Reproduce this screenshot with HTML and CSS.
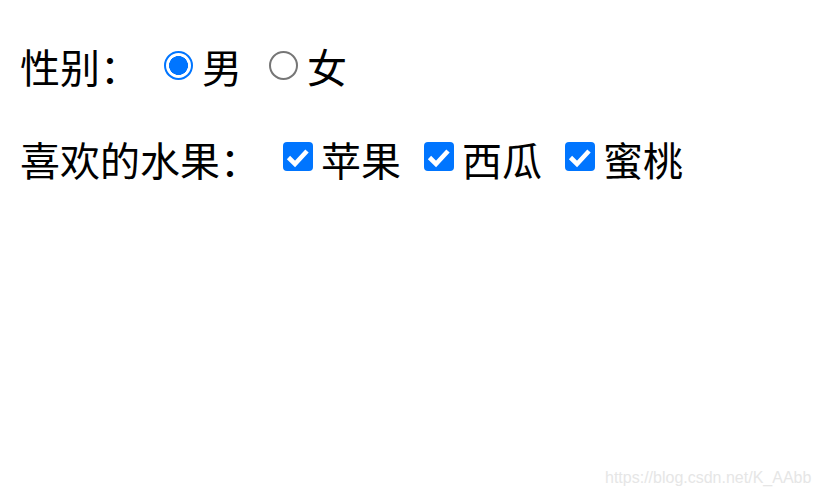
FILE: index.html
```
<!DOCTYPE html>
<html lang="zh-CN">
<head>
<meta charset="utf-8">
<title>表单</title>
<link rel="stylesheet" href="styles.css">
</head>
<body>
<div class="page">
  <div class="row">
    <span class="label">性别：</span>
    <span class="radio checked g-lbl"></span><span class="opt opt-r">男</span>
    <span class="radio g-opt"></span><span class="opt opt-r2">女</span>
  </div>
  <div class="row row2">
    <span class="label">喜欢的水果：</span>
    <span class="check g-lbl"><svg viewBox="0 0 30 29" width="30" height="29"><polyline points="5.5,15.5 12,22 24,9" fill="none" stroke="#fff" stroke-width="4.6" stroke-linecap="butt" stroke-linejoin="miter"/></svg></span><span class="opt">苹果</span>
    <span class="check g-opt"><svg viewBox="0 0 30 29" width="30" height="29"><polyline points="5.5,15.5 12,22 24,9" fill="none" stroke="#fff" stroke-width="4.6" stroke-linecap="butt" stroke-linejoin="miter"/></svg></span><span class="opt">西瓜</span>
    <span class="check g-opt"><svg viewBox="0 0 30 29" width="30" height="29"><polyline points="5.5,15.5 12,22 24,9" fill="none" stroke="#fff" stroke-width="4.6" stroke-linecap="butt" stroke-linejoin="miter"/></svg></span><span class="opt">蜜桃</span>
  </div>
</div>
<div class="watermark">https://blog.csdn.net/K_AAbb</div>
</body>
</html>
```

FILE: styles.css
```
html, body {
  margin: 0;
  padding: 0;
  background: #fff;
}
body {
  width: 820px;
  height: 498px;
  position: relative;
  overflow: hidden;
  font-family: "Noto Sans CJK SC", "Noto Sans", sans-serif;
  font-size: 40px;
  color: #000;
}
.page {
  padding: 40px 0 0 20px;
}
.row {
  display: flex;
  align-items: flex-start;
  height: 53px;
  line-height: 53px;
  white-space: nowrap;
}
.row2 {
  margin-top: 40px;
}
.radio {
  box-sizing: border-box;
  width: 29px;
  height: 29px;
  border-radius: 50%;
  border: 2.8px solid #767676;
  margin-top: 11px;
  flex: none;
}
.radio.checked {
  border-color: #0075ff;
  background: radial-gradient(circle, #0075ff 0 9.2px, #fff 9.7px);
}
.row .radio.g-lbl { margin-left: 24px; }
.row .radio.g-opt { margin-left: 27px; }
.opt { margin-left: 9px; }
.opt-r2 { margin-left: 9px; }
.check {
  width: 30px;
  height: 29px;
  border-radius: 4px;
  background: #0075ff;
  margin-top: 9px;
  flex: none;
  display: block;
}
.check svg { display: block; }
.row .check.g-lbl { margin-left: 23px; }
.row .check.g-opt { margin-left: 23px; }
.row2 .opt { margin-left: 8px; }
.watermark {
  position: absolute;
  left: 605px;
  top: 469px;
  font-family: "Liberation Sans", Arial, sans-serif;
  font-size: 16px;
  line-height: 18px;
  color: #e6e6e6;
}
```
